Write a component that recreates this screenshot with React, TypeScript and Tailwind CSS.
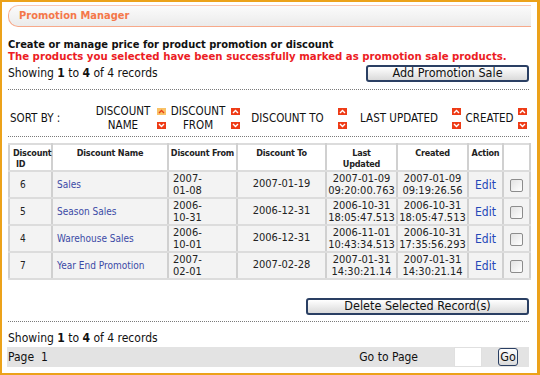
import React from "react";

type Row = {
  id: string;
  name: string;
  from: [string, string];
  to: string;
  upd: [string, string];
  cr: [string, string];
};

const rows: Row[] = [
  { id: "6", name: "Sales", from: ["2007-", "01-08"], to: "2007-01-19", upd: ["2007-01-09", "09:20:00.763"], cr: ["2007-01-09", "09:19:26.56"] },
  { id: "5", name: "Season Sales", from: ["2006-", "10-31"], to: "2006-12-31", upd: ["2006-10-31", "18:05:47.513"], cr: ["2006-10-31", "18:05:47.513"] },
  { id: "4", name: "Warehouse Sales", from: ["2006-", "10-01"], to: "2006-12-31", upd: ["2006-11-01", "10:43:34.513"], cr: ["2006-10-31", "17:35:56.293"] },
  { id: "7", name: "Year End Promotion", from: ["2007-", "02-01"], to: "2007-02-28", upd: ["2007-01-31", "14:30:21.14"], cr: ["2007-01-31", "14:30:21.14"] },
];

function Arrow({ up, active }: { up: boolean; active?: boolean }) {
  return (
    <span className={`flex h-[7px] w-[9px] items-center justify-center ${active ? "bg-[#f9c266]" : "bg-[#ee3b16]"}`}>
      <svg width="7" height="5" viewBox="0 0 7 5">
        <path d={up ? "M1 4L3.5 1.5L6 4" : "M1 1L3.5 3.5L6 1"} fill="none" stroke={active ? "#e8401a" : "#ffffff"} strokeWidth="1.4" />
      </svg>
    </span>
  );
}

function Arrows({ activeUp }: { activeUp?: boolean }) {
  return (
    <div className="flex flex-col gap-[7px]">
      <Arrow up active={activeUp} />
      <Arrow up={false} />
    </div>
  );
}

function Btn({ children, className }: { children: React.ReactNode; className: string }) {
  return (
    <div className={`flex items-center justify-center rounded-[3px] border-2 border-[#2a3f63] bg-gradient-to-b from-white to-[#dadada] text-[12.5px] leading-none text-[#111] ${className}`}>
      {children}
    </div>
  );
}

function Dotted() {
  return <div className="h-0 border-t border-dotted border-[#7a7a7a]" />;
}

const cell = "border-2 border-[#dcdcdc] border-x-[#d0d0d0]";

export default function App() {
  return (
    <div className="h-[375px] w-[540px] overflow-hidden border-t-2 border-b-2 border-l-2 border-r-[3px] border-[#eca21a] bg-white pl-[6px] pr-[8px] font-['DejaVu_Sans_Condensed','DejaVu_Sans',sans-serif] text-[#111]">
      {/* Header */}
      <div className="-mr-[2px] mt-[3px] flex h-[22px] items-center rounded-l-[10px] border-y border-l border-[#f7a98a] border-t-[#f9c7b4] bg-gradient-to-b from-[#fbfbfb] to-[#ebebeb] pl-[10px]">
        <span className="text-[11px] font-bold text-[#f4784a]">Promotion Manager</span>
      </div>

      <div className="mt-[12px] whitespace-nowrap text-[11px] font-bold leading-[12px]">Create or manage price for product promotion or discount</div>
      <div className="whitespace-nowrap text-[11.3px] font-bold leading-[12px] text-[#ec1c24]">The products you selected have been successfully marked as promotion sale products.</div>

      <div className="flex h-[20px] items-center justify-between">
        <span className="text-[12px]">
          Showing <b>1</b> to <b>4</b> of 4 records
        </span>
        <Btn className="h-[17px] w-[163px]">Add Promotion Sale</Btn>
      </div>

      <div className="mt-[6px]">
        <Dotted />
      </div>

      {/* Sort bar */}
      <div className="flex h-[46px] items-center pt-[10px] text-[11.5px] leading-[14px] text-[#111]">
        <div className="w-[84px] pl-[2px]">SORT BY :</div>
        <div className="flex items-center">
          <div className="w-[62px] text-center">DISCOUNT<br />NAME</div>
          <div className="ml-[3px]"><Arrows activeUp /></div>
        </div>
        <div className="flex items-center">
          <div className="w-[64px] text-center">DISCOUNT<br />FROM</div>
          <div className="ml-[1px]"><Arrows /></div>
        </div>
        <div className="flex items-center">
          <div className="w-[95px] whitespace-nowrap text-center">DISCOUNT TO</div>
          <div className="ml-[3px]"><Arrows /></div>
        </div>
        <div className="flex items-center">
          <div className="w-[104px] whitespace-nowrap text-center">LAST UPDATED</div>
          <div className="ml-[1px]"><Arrows /></div>
        </div>
        <div className="flex items-center">
          <div className="w-[57px] whitespace-nowrap text-center">CREATED</div>
          <div><Arrows /></div>
        </div>
      </div>

      <Dotted />

      {/* Table */}
      <table className="mt-[6px] w-[521px] table-fixed border-collapse text-[#222]">
        <colgroup>
          <col className="w-[43px]" />
          <col className="w-[116px]" />
          <col className="w-[69px]" />
          <col className="w-[89px]" />
          <col className="w-[71px]" />
          <col className="w-[71px]" />
          <col className="w-[35px]" />
          <col className="w-[27px]" />
        </colgroup>
        <thead>
          <tr className="h-[26px] bg-white align-top text-[9px] font-bold leading-[11px] tracking-[-0.2px]">
            <th className={`${cell} pl-[3px] pt-[3px] text-left`}>Discount<br /><span className="pl-[3px]">ID</span></th>
            <th className={`${cell} pt-[3px] text-center`}>Discount Name</th>
            <th className={`${cell} pt-[3px] text-center`}>Discount From</th>
            <th className={`${cell} pt-[3px] text-center`}>Discount To</th>
            <th className={`${cell} pt-[3px] text-center`}>Last<br />Updated</th>
            <th className={`${cell} pt-[3px] text-center`}>Created</th>
            <th className={`${cell} pt-[3px] text-center`}>Action</th>
            <th className={cell}></th>
          </tr>
        </thead>
        <tbody>
          {rows.map((r) => (
            <tr key={r.id} className="h-[27px] bg-[#f3f3f3] align-middle">
              <td className={`${cell} pl-[10px] text-[10px]`}>{r.id}</td>
              <td className={`${cell} pl-[4px] text-[10px] text-[#3b4aa6]`}>{r.name}</td>
              <td className={`${cell} pl-[4px] text-[11px] leading-[11.5px]`}>{r.from[0]}<br />{r.from[1]}</td>
              <td className={`${cell} text-center text-[11px]`}>{r.to}</td>
              <td className={`${cell} text-center text-[11px] leading-[11.5px]`}>{r.upd[0]}<br />{r.upd[1]}</td>
              <td className={`${cell} text-center text-[11px] leading-[11.5px]`}>{r.cr[0]}<br />{r.cr[1]}</td>
              <td className={`${cell} text-center text-[12px] text-[#2447b8]`}>Edit</td>
              <td className={`${cell} text-center`}>
                <span className="inline-block h-[13px] w-[13px] rounded-[2px] border border-[#8c8c8c] bg-gradient-to-br from-[#e2e2e2] to-white align-middle" />
              </td>
            </tr>
          ))}
        </tbody>
      </table>

      <div className="mt-[18px] flex justify-end">
        <Btn className="h-[17px] w-[223px]">Delete Selected Record(s)</Btn>
      </div>

      <div className="mt-[6px]">
        <Dotted />
      </div>

      <div className="mt-[9px] h-[14px] text-[12px] leading-[14px]">
        Showing <b>1</b> to <b>4</b> of 4 records
      </div>

      <div className="-ml-[1px] mt-[2px] flex h-[20px] items-center bg-[#e3e3e3] text-[12px]">
        <span className="whitespace-pre pl-[1px]">Page  1</span>
        <span className="ml-auto">Go to Page</span>
        <span className="ml-[36px] h-[20px] w-[28px] border border-[#e0e0e0] bg-white" />
        <Btn className="ml-[16px] mr-[11px] h-[18px] w-[20px] border-[1.5px]">Go</Btn>
      </div>
    </div>
  );
}
